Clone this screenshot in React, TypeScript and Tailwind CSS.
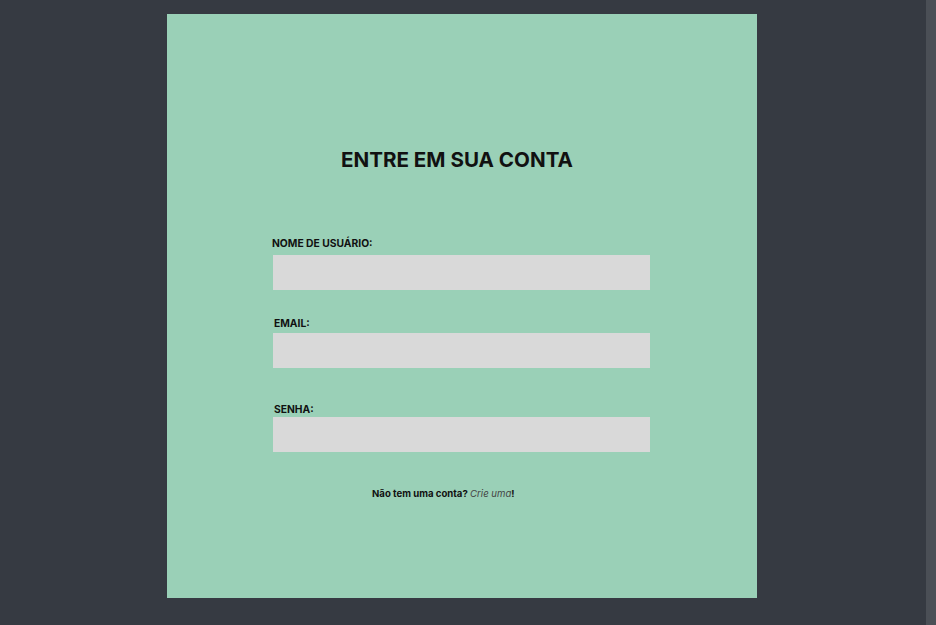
export default function App() {
  return (
    <div className="flex h-[625px] w-full bg-[#363a42] font-['Inter',sans-serif] text-[#111]">
      <div className="flex flex-1 pt-[14px] pl-[167px]">
        <div className="flex h-[584px] w-[590px] flex-col bg-[#9ad0b7] pt-[134px]">
          <h1 className="ml-[174px] text-[20.6px] font-bold leading-[24px]">ENTRE EM SUA CONTA</h1>

          <form className="mt-[65px] ml-[105px] flex w-[378px] flex-col">
            <label htmlFor="user" className="text-[10.3px] font-bold leading-[12px]">
              NOME DE USUÁRIO:
            </label>
            <input id="user" type="text" className="mt-[6px] ml-px h-[35px] w-[377px] bg-[#d9d9d9] outline-none" />

            <label htmlFor="email" className="mt-[27px] ml-[2px] text-[10.3px] font-bold leading-[12px]">
              EMAIL:
            </label>
            <input id="email" type="email" className="mt-[4px] ml-px h-[35px] w-[377px] bg-[#d9d9d9] outline-none" />

            <label htmlFor="senha" className="mt-[35px] ml-[2px] text-[10.3px] font-bold leading-[12px]">
              SENHA:
            </label>
            <input id="senha" type="password" className="mt-[2px] ml-px h-[35px] w-[377px] bg-[#d9d9d9] outline-none" />
          </form>

          <p className="mt-[36px] ml-[205px] text-[9.6px] font-bold leading-[12px]">
            Não tem uma conta? <em className="font-normal text-[#444]">Crie uma</em>!
          </p>
        </div>
      </div>
      <div className="w-[10px] bg-[#4b4f56]" />
    </div>
  );
}
